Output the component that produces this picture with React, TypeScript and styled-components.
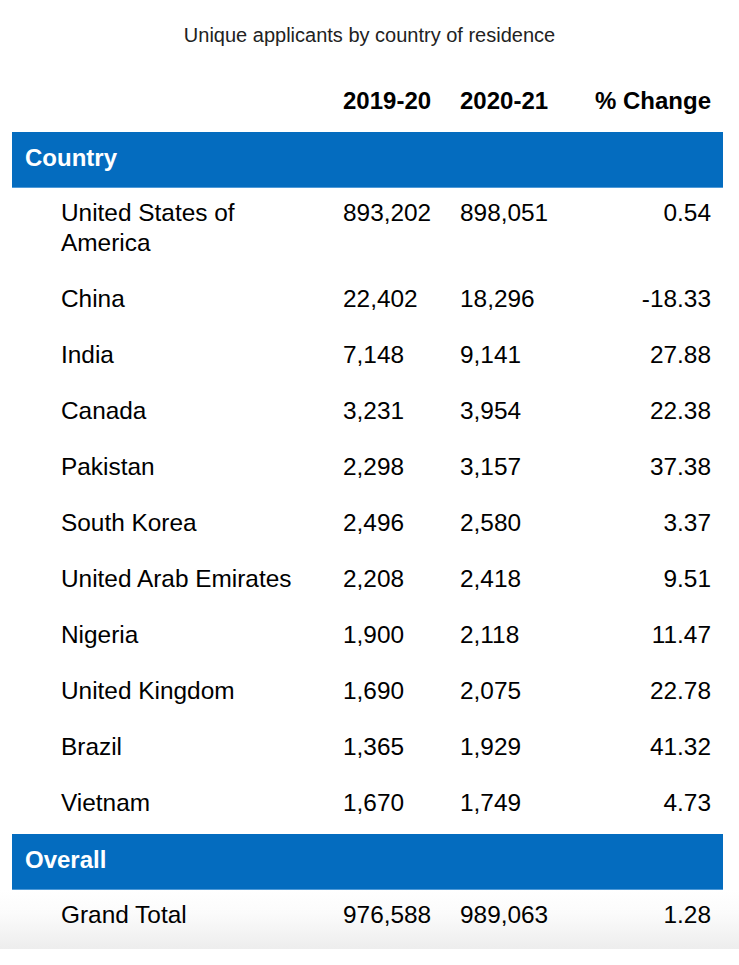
import React from "react";
import styled, { createGlobalStyle } from "styled-components";

const Global = createGlobalStyle`
  html, body { margin: 0; padding: 0; background: #ffffff; }
  body { font-family: "Liberation Sans", Arial, Helvetica, sans-serif; color: #000; }
`;

const Page = styled.div`
  width: 739px;
  padding-top: 23px;
`;

const Title = styled.h1`
  margin: 0;
  font-size: 20px;
  line-height: 24px;
  font-weight: 400;
  color: #222;
  text-align: center;
`;

const Section = styled.div<{ $shade?: boolean }>`
  padding-left: 12px;
  background: ${(p) =>
    p.$shade ? "linear-gradient(#ffffff 0%, #fbfbfb 40%, #ededed 100%)" : "transparent"};
`;

const Table = styled.div<{ $top?: number }>`
  margin-top: ${(p) => p.$top ?? 0}px;
  width: 711px;
`;

const Row = styled.div<{ $total?: boolean }>`
  display: grid;
  grid-template-columns: 331px 117px 117px 1fr;
  font-size: 24.4px;
  line-height: 30px;
  padding: 10px 0 ${(p) => (p.$total ? "19px" : "16px")};
`;

const HeadRow = styled.div`
  display: grid;
  grid-template-columns: 331px 117px 117px 1fr;
  font-size: 24px;
  line-height: 30px;
  font-weight: 700;
  height: 46px;
`;

const Band = styled.div`
  background: #046cbf;
  border-bottom: 1px solid #4f9ad8;
  color: #fff;
  font-size: 24px;
  line-height: 30px;
  font-weight: 700;
  padding: 11px 13px 14px;
`;

const Name = styled.div`
  padding-left: 49px;
  padding-right: 20px;
`;

const Num = styled.div``;

const Change = styled.div`
  text-align: right;
  padding-right: 12px;
`;

const rows: [string, string, string, string][] = [
  ["United States of America", "893,202", "898,051", "0.54"],
  ["China", "22,402", "18,296", "-18.33"],
  ["India", "7,148", "9,141", "27.88"],
  ["Canada", "3,231", "3,954", "22.38"],
  ["Pakistan", "2,298", "3,157", "37.38"],
  ["South Korea", "2,496", "2,580", "3.37"],
  ["United Arab Emirates", "2,208", "2,418", "9.51"],
  ["Nigeria", "1,900", "2,118", "11.47"],
  ["United Kingdom", "1,690", "2,075", "22.78"],
  ["Brazil", "1,365", "1,929", "41.32"],
  ["Vietnam", "1,670", "1,749", "4.73"],
];

export default function App() {
  return (
    <>
      <Global />
      <Page>
        <Title>Unique applicants by country of residence</Title>
        <Section>
          <Table $top={39}>
            <HeadRow>
              <div />
              <Num>2019-20</Num>
              <Num>2020-21</Num>
              <Change>% Change</Change>
            </HeadRow>
            <Band>Country</Band>
            {rows.map((r) => (
              <Row key={r[0]}>
                <Name>{r[0]}</Name>
                <Num>{r[1]}</Num>
                <Num>{r[2]}</Num>
                <Change>{r[3]}</Change>
              </Row>
            ))}
            <Band>Overall</Band>
          </Table>
        </Section>
        <Section $shade>
          <Table>
            <Row $total>
              <Name>Grand Total</Name>
              <Num>976,588</Num>
              <Num>989,063</Num>
              <Change>1.28</Change>
            </Row>
          </Table>
        </Section>
      </Page>
    </>
  );
}
